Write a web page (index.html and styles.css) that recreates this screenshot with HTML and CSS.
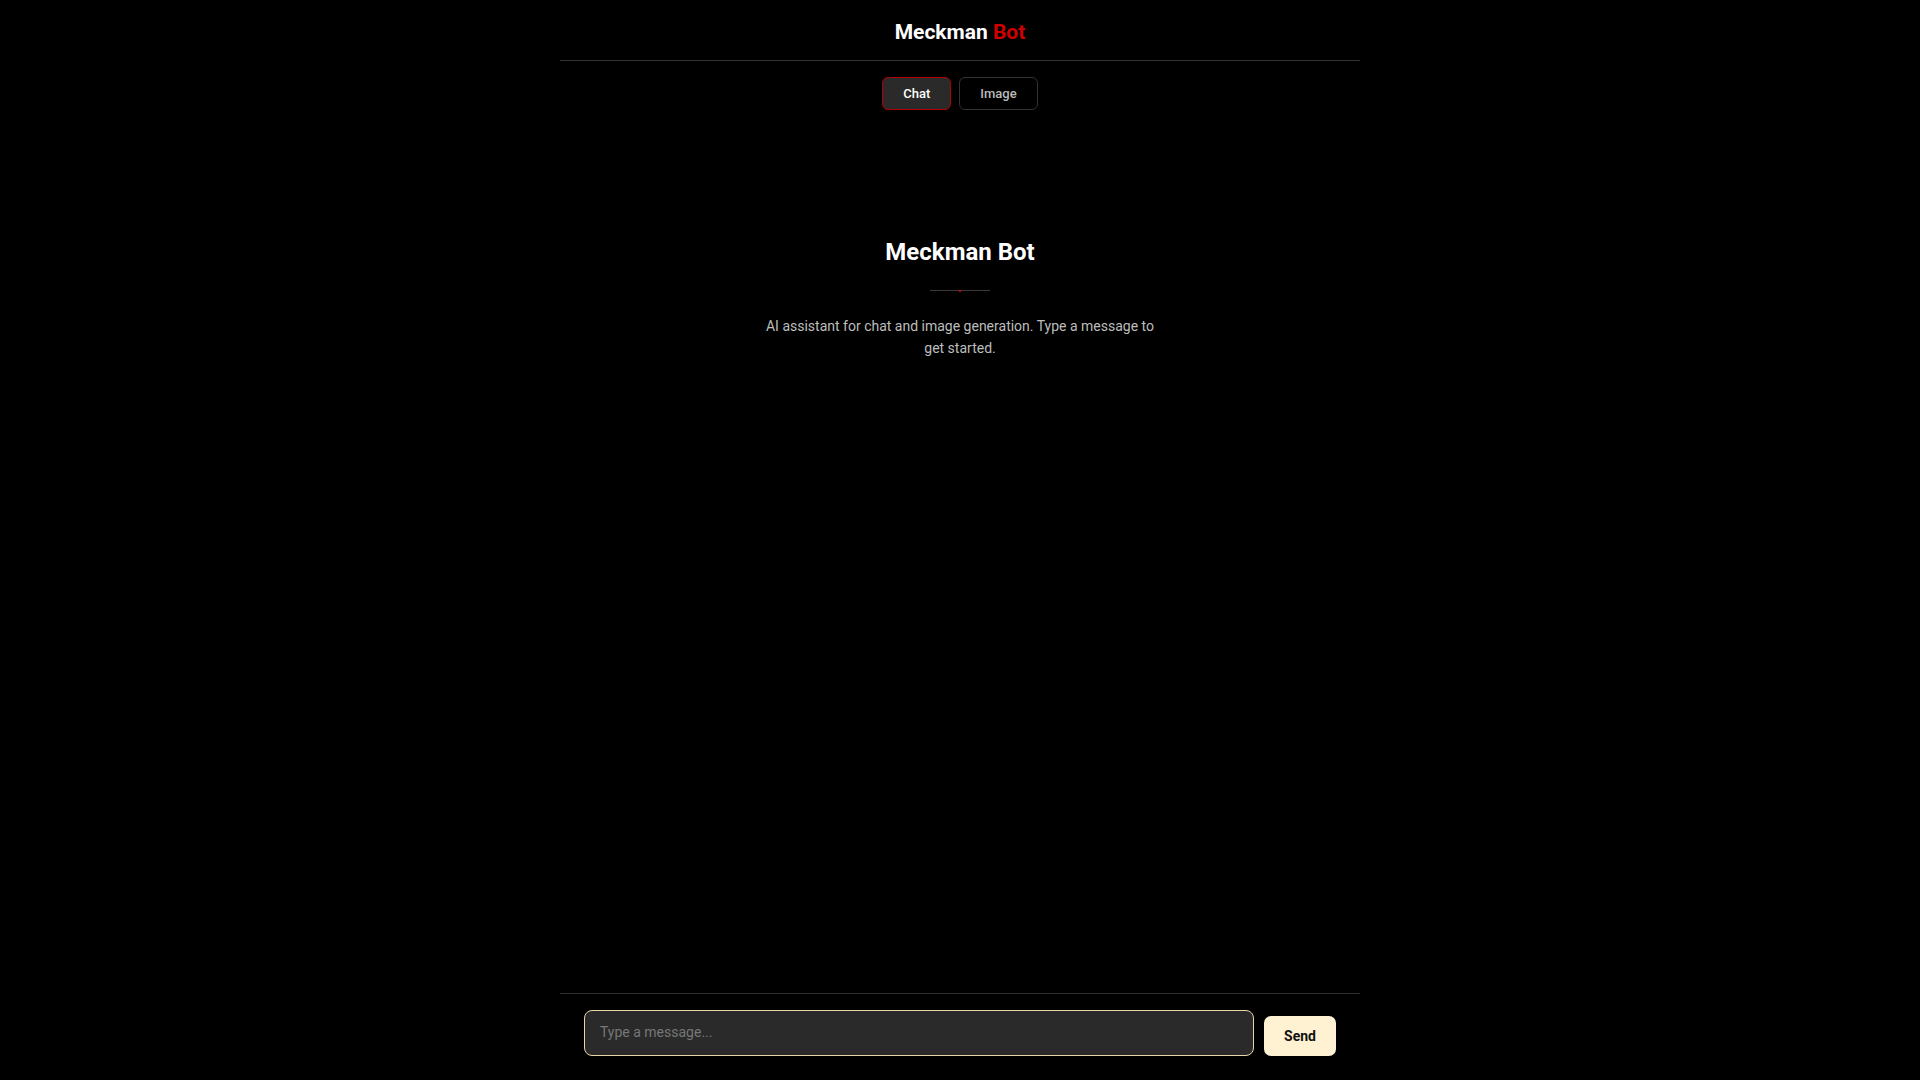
FILE: index.html
```html
<!DOCTYPE html>
<html lang="en">
<head>
<meta charset="utf-8">
<title>Meckman Bot</title>
<link rel="stylesheet" href="styles.css">
</head>
<body>
<div class="app">
  <header class="header">
    <h1 class="brand">Meckman <span class="brand-accent">Bot</span></h1>
  </header>
  <nav class="tabs">
    <button class="tab tab-active" type="button">Chat</button>
    <button class="tab" type="button">Image</button>
  </nav>
  <main class="main">
    <section class="welcome">
      <h2 class="welcome-title">Meckman Bot</h2>
      <div class="welcome-divider"></div>
      <p class="welcome-text">AI assistant for chat and image generation. Type a message to get started.</p>
    </section>
  </main>
  <footer class="composer">
    <textarea class="composer-input" rows="1" placeholder="Type a message..." autofocus></textarea>
    <button class="composer-send" type="button">Send</button>
  </footer>
</div>
</body>
</html>
```

FILE: styles.css
```css
* { box-sizing: border-box; }

html, body {
  margin: 0;
  padding: 0;
  height: 100%;
  background: #000;
  color: #fff;
  font-family: Roboto, "Liberation Sans", Arial, sans-serif;
}

.app {
  width: 800px;
  height: 100vh;
  margin: 0 auto;
  display: flex;
  flex-direction: column;
}

.header {
  height: 61px;
  border-bottom: 1px solid #333;
  display: flex;
  align-items: center;
  justify-content: center;
}

.brand {
  margin: 0;
  font-size: 21px;
  font-weight: 700;
  color: #fff;
  line-height: 1;
  padding-top: 4px;
}

.brand-accent { color: #d00000; }

.tabs {
  display: flex;
  justify-content: center;
  gap: 8px;
  margin-top: 16px;
}

.tab {
  height: 33px;
  padding: 0 20px;
  border: 1px solid #333;
  border-radius: 6px;
  background: #000;
  color: #bbb;
  font-family: inherit;
  font-size: 13px;
  font-weight: 500;
  cursor: pointer;
}

.tab-active {
  background: #2a2a2a;
  border-color: #b00000;
  color: #fff;
}

.main {
  flex: 1;
  display: flex;
  flex-direction: column;
  align-items: center;
  padding-top: 128px;
}

.welcome {
  display: flex;
  flex-direction: column;
  align-items: center;
  text-align: center;
}

.welcome-title {
  margin: 0;
  font-size: 24px;
  font-weight: 700;
  color: #fff;
}

.welcome-divider {
  position: relative;
  width: 60px;
  height: 1px;
  margin-top: 24px;
  background: #3a3a3a;
}

.welcome-divider::after {
  content: "";
  position: absolute;
  left: 29px;
  top: 0;
  width: 2px;
  height: 2px;
  background: #d00000;
}

.welcome-text {
  margin: 24px 0 0;
  max-width: 400px;
  font-size: 14px;
  line-height: 22px;
  color: #bdbdbd;
}

.composer {
  border-top: 1px solid #2e2e2e;
  padding: 16px 24px 24px;
  display: flex;
  align-items: flex-end;
  gap: 10px;
}

.composer-input {
  flex: 1;
  height: 46px;
  resize: none;
  padding: 11px 15px;
  border: 1px solid #e6d6a8;
  border-radius: 8px;
  background: #2a2a2a;
  color: #eee;
  font-family: inherit;
  font-size: 14px;
  line-height: 20px;
  outline: none;
  caret-color: #fff;
}

.composer-input::placeholder { color: #777; }

.composer-send {
  width: 72px;
  height: 40px;
  border: none;
  border-radius: 7px;
  background: #fff2d2;
  color: #111;
  font-family: inherit;
  font-size: 14px;
  font-weight: 700;
  cursor: pointer;
}
```
